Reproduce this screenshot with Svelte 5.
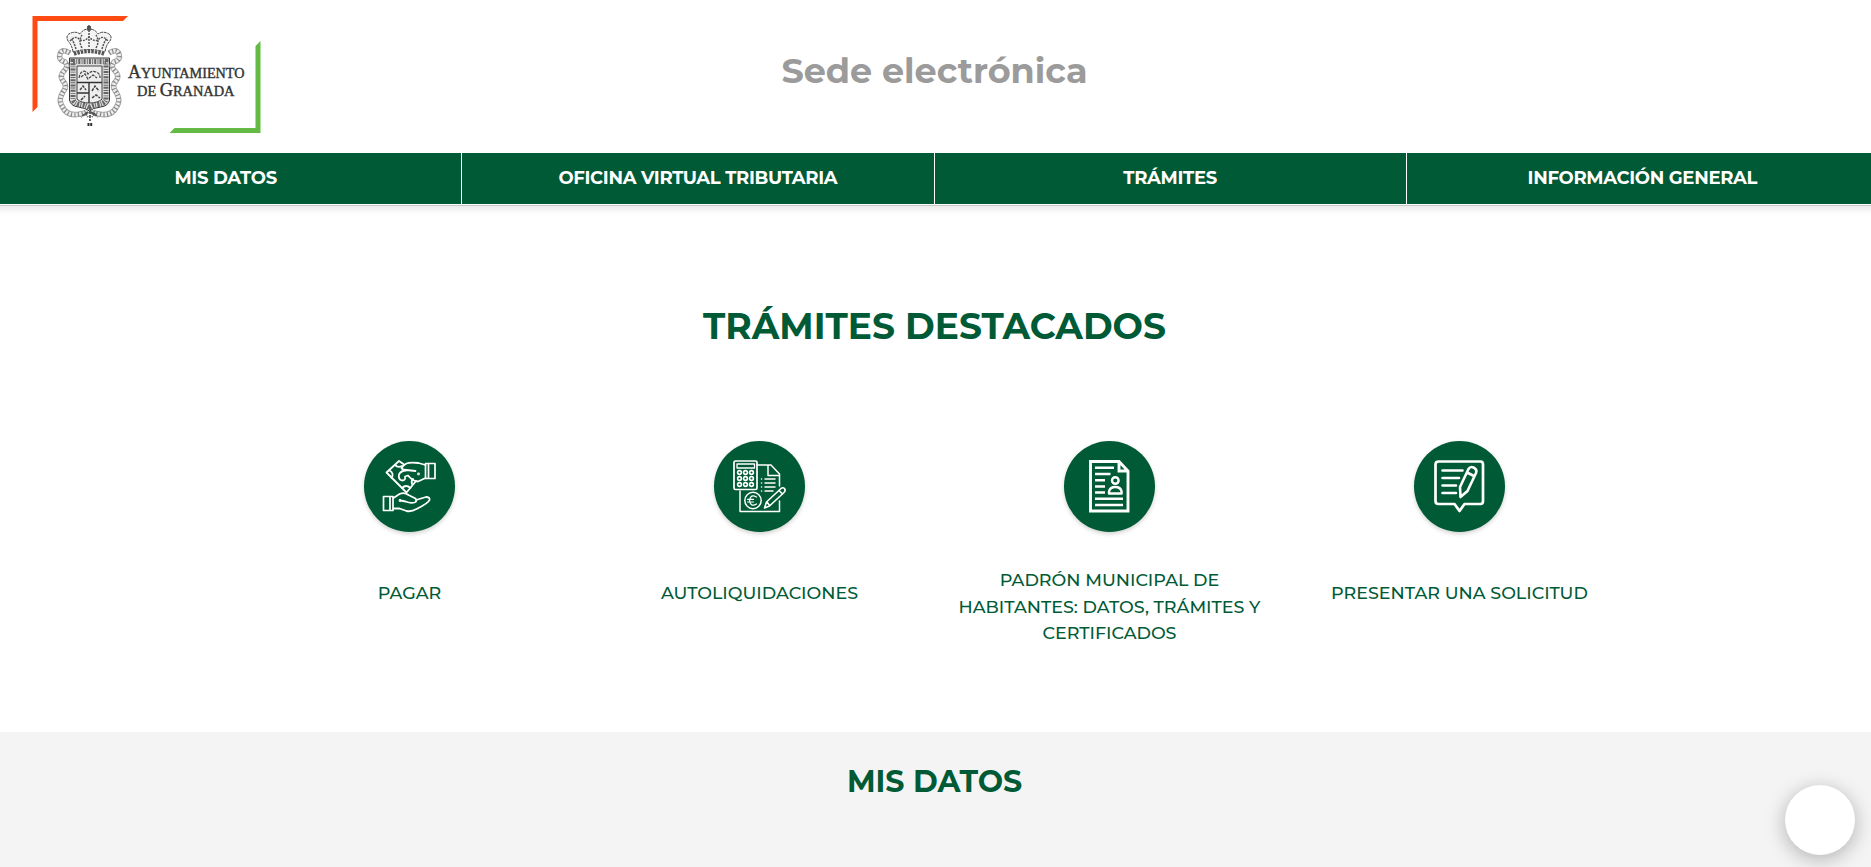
<script>
  const nav = ['MIS DATOS', 'OFICINA VIRTUAL TRIBUTARIA', 'TRÁMITES', 'INFORMACIÓN GENERAL'];
  const cards = [
    { icon: 'pay', lines: ['PAGAR'] },
    { icon: 'calc', lines: ['AUTOLIQUIDACIONES'] },
    { icon: 'doc', lines: ['PADRÓN MUNICIPAL DE', 'HABITANTES: DATOS, TRÁMITES Y', 'CERTIFICADOS'] },
    { icon: 'note', lines: ['PRESENTAR UNA SOLICITUD'] },
  ];
</script>

<header>
  <svg class="logo" viewBox="0 0 240 132" role="img" aria-label="Ayuntamiento de Granada">
    <path fill="#ff4a12" d="M.5 4h95.500l-5 5H5.500v86l-5 5z" />
    <path fill="#63bb46" d="M228.500 29v92H137.500l5-5h81V34z" />
    <g fill="none" stroke="#555" stroke-width="1">
      <!-- crown -->
      <path d="M41 40q-1-7-5-11-3-6 3-8 5-2 9 1 3-5 9-5t9 5q4-3 9-1 6 2 3 8-4 4-5 11-16-5-32 0z" fill="#f4f4f4" stroke="#444" stroke-dasharray="3 .7" />
      <path d="M44 37q-2-7-5-11m11 10q-4-7 0-13m7 12V19m7 17q4-7 0-13m6 14q2-7 5-11" stroke="#555" stroke-dasharray="2 1" stroke-width="1.500" />
      <path d="M57 19v-6m-2 2h4" stroke="#333" stroke-width="1.300" />
      <path d="M42 42q15-5 30 0" stroke-dasharray="2.500 1" stroke-width="3.500" stroke="#555" />
      <circle cx="57" cy="17" r="1.800" fill="#555" />
      <path d="M38 29q5-6 9-2t10-2q6 6 10 2t9 2" stroke-dasharray="2 1" stroke="#555" stroke-width="1.400" />
      <!-- shield -->
      <path d="M37.500 46h40v42q-1 6-9 7-8 1-11 4-4-3-11-4-8-1-9-7z" fill="#ddd" stroke="#333" />
      <path d="M41 49.500h33v38q-1 4-8 5-6 1-8.500 3-3-2-9-3-6.500-1-7.500-5z" stroke-dasharray="2 1.300 .9 1.100" stroke-width="5" stroke="#666" />
      <path d="M45 54h25v33q-4 4-12.500 4-8.500 0-12.500-4z" fill="#eee" stroke="#444" />
      <path d="M45 70.500h25M57 71v20M45 81h12" stroke="#333" stroke-width="1.400" />
      <path d="M47 66q1-6 5-7 3 1 4 3 4-4 8-2 4 1 4 6M49 65l4-3 3 5 5-4 4 3" stroke-dasharray="3 1" stroke="#444" stroke-width="1.200" />
      <path d="M48 78l3-4 3 4M60 79l3-5 4 5M60 86l4-3 4 3M49 88l4-4" stroke-dasharray="3 1" stroke="#444" stroke-width="1.500" />
      <!-- mantling -->
      <path d="M38 41q-8-5-10 1-2 6 5 8 4 4-1 9-5 5-1 10 5 5 0 11-5 8-1 14 5 11 18 8 6-1 7-3M77 41q8-5 10 1 2 6-5 8-4 4 1 9 5 5 1 10-5 5 0 11 5 8 1 14-5 11-18 8-6-1-7-3" stroke-width="5.500" stroke="#aaa" />
      <path d="M38 41q-8-5-10 1-2 6 5 8 4 4-1 9-5 5-1 10 5 5 0 11-5 8-1 14 5 11 18 8 6-1 7-3M77 41q8-5 10 1 2 6-5 8-4 4 1 9 5 5 1 10-5 5 0 11 5 8 1 14-5 11-18 8-6-1-7-3" stroke-width="3.500" stroke="#eee" />
      <path d="M38 41q-8-5-10 1-2 6 5 8 4 4-1 9-5 5-1 10 5 5 0 11-5 8-1 14 5 11 18 8 6-1 7-3M77 41q8-5 10 1 2 6-5 8-4 4 1 9 5 5 1 10-5 5 0 11 5 8 1 14-5 11-18 8-6-1-7-3" stroke-width="4.500" stroke="#888" stroke-dasharray="1.200 2.300" />
      <path d="M58 95v14m-2-9l-7 5m10-5l7 5M53 101l3 4m7-4l-3 4" stroke="#555" stroke-width="1.800" stroke-dasharray="3 1" />
      <path d="M55.500 112.500h5" stroke="#333" stroke-width="3" stroke-dasharray="2 .7" />
    </g>
    <g class="brand">
      <text x="96" y="65.500" textLength="116.500" lengthAdjust="spacingAndGlyphs"><tspan font-size="19">A</tspan>YUNTAMIENTO</text>
      <text x="105" y="84" textLength="97.500" lengthAdjust="spacingAndGlyphs">DE <tspan font-size="19">G</tspan>RANADA</text>
    </g>
  </svg>
  <h1>Sede electrónica</h1>
</header>

<nav>
  {#each nav as item}
    <a href="#top">{item}</a>
  {/each}
</nav>

<main>
  <h2>TRÁMITES DESTACADOS</h2>
  <div class="cards">
    {#each cards as card}
      <div class="card">
        <div class="circle">
          <svg viewBox="0 0 91 91" fill="none" stroke="#fff" stroke-width="1.8" stroke-linejoin="round" stroke-linecap="round">
            {#if card.icon === 'pay'}
              <path d="M40 23.500L35 20 22.500 31.500l20 20L52 40" />
              <path d="M31 24q3 3 7 1M25.500 29.500q5 3 2 7.500M38 47q4-4 8.500 0M48 43q-1-3 1-5" />
              <path d="M61.500 24l-7-2q-9-1-12 .5-3 1.500-5 4.500 1 2 5 2l9 1M42 29.500q-5 0-7 4-1 5 3 6 4 0 3-4l3-1q5 6 10 6l7.500-3.500" />
              <path d="M61.500 22.500v15H71v-15zM64.500 22.500v15" stroke-width="1.700" />
              <path d="M19.500 55.500v14H29v-14zM26 55.500v14" stroke-width="1.700" />
              <path d="M29.500 57l6-4q5-2 9 1l7 3.500q2 3-1 4-4 1-9-1l-5-1M52 59l10-3q4 0 3.500 3-1 3-13 9-5 3-10 2l-7-2.500h-6" />
              <circle cx="54.500" cy="33" r=".5" /><circle cx="36" cy="59.500" r=".5" />
            {:else if card.icon === 'calc'}
              <path d="M43 24h14l8.500 9v12M65.500 60v10.500H26V50M54 25v9.500h10.500" stroke-width="1.500" />
              <rect x="20" y="20" width="23" height="28.500" rx="1.500" stroke-width="1.700" />
              <rect x="23" y="23" width="17.500" height="4" stroke-width="1.300" />
              {#each [31.5, 37.5, 43.500] as y}
                {#each [25.500, 31.500, 37.500] as x}
                  <circle cx={x} cy={y} r="1.900" stroke-width="1.600" />
                {/each}
              {/each}
              <path d="M51 38h10M51 42h10M51 46h10M51 50h8M47.500 38h.1M47.500 42h.1M47.500 46h.1M47.500 50h.1" stroke-width="1.500" />
              <circle cx="39" cy="59.500" r="8.200" stroke-width="1.500" />
              <path d="M42.500 56q-6-3.500-7 3.500 1 7 7 3.500M33.500 58.300h6M33.500 61h6" stroke-width="1.200" />
              <path d="M50.500 67l2-6 14.500-13.500q2-1.500 3.500 0 1.500 2-.5 4L55.500 65zM53 61l2.500 3.500M65 49.500l3.500 3.500" stroke-width="1.600" />
            {:else if card.icon === 'doc'}
              <path d="M26.500 20.500h28.500L64 30v40H26.500zM55 21v9h9" stroke-width="2.900" stroke-linejoin="miter" stroke-linecap="butt" />
              <path d="M31 26.700h19M31 33h15.500M31 39.200h10M31 45.500h10M31 51.500h10M31 57.800h28M31 64h28" stroke-width="2.600" stroke-linecap="butt" />
              <circle cx="51.300" cy="39.500" r="3.300" stroke-width="2.400" />
              <path d="M45 52.500v-2q1-4.500 6.300-4.500t6.300 4.500v2z" stroke-width="2.400" />
            {:else}
              <path d="M24.500 20.500h42q2.500 0 2.500 3v36.500q0 3-2.500 3H50.500L45.500 70l-5-7h-16q-3 0-3-3V23.500q0-3 3-3z" stroke-width="2.700" />
              <path d="M28.500 29.500h20M28.500 37h16.500M28.500 44.500h13.500M28.500 52h13.500" stroke-width="2.600" />
              <path d="M46 46l8.500-18q2-3 5-1.500 4 2 2.500 5.500l-8.500 18-7 6zM53 31.500l7 3.500" stroke-width="2.600" />
            {/if}
          </svg>
        </div>
        <p>{#each card.lines as line}<span>{line}</span>{/each}</p>
      </div>
    {/each}
  </div>
</main>

<section>
  <h3>MIS DATOS</h3>
</section>
<div class="fab"></div>

<style>
  :global(body) {
    font-family: Montserrat, Inter, 'Open Sans', sans-serif;
    background: #fff;
    overflow: hidden;
  }
  h1, h2, h3, p { margin: 0; }
  header {
    height: 153px;
    display: grid;
    grid-template-columns: 1fr auto 1fr;
    align-items: start;
  }
  .logo { width: 240px; height: 132px; margin: 12px 0 0 32px; }
  .brand { font-family: 'Liberation Serif', serif; font-size: 15px; fill: #333; stroke: #333; stroke-width: .4px; }
  h1 {
    font-size: 35px;
    line-height: 44px;
    font-weight: 700;
    color: #9b9b9b;
    padding: 49px 2px 0 0;
  }
  nav {
    display: flex;
    margin: 0 -8px 0 -10px;
    height: 51px;
    background: #005a36;
    border-bottom: 1px solid #fff;
    box-shadow: 0 1px 0 #c8c8c8, 0 4px 8px rgba(0, 0, 0, .1);
  }
  a {
    box-sizing: border-box;
    width: 25%;
    border-right: 1px solid #fff;
    color: #fff;
    text-align: center;
    text-decoration: none;
    font-size: 18px;
    letter-spacing: -.3px;
    font-weight: 700;
    line-height: 51px;
  }
  main { height: 527px; box-sizing: border-box; padding-top: 97px; }
  h2, h3 { text-align: center; color: #005a36; font-weight: 700; padding-right: 2px; }
  h2 { font-size: 36px; line-height: 48px; }
  .cards {
    width: 1400px;
    margin: 91px auto 0;
    padding-right: 2px;
    display: grid;
    grid-template-columns: repeat(4, 1fr);
  }
  .card { display: flex; flex-direction: column; align-items: center; gap: 35px; }
  .circle {
    width: 91px;
    height: 91px;
    border-radius: 50%;
    background: #005a36;
    box-shadow: 0 2px 4px rgba(0, 0, 0, .18);
  }
  .circle svg { display: block; }
  p {
    min-height: 53px;
    display: flex;
    flex-direction: column;
    align-items: center;
    justify-content: center;
    color: #005a36;
    font-size: 17.5px;
    font-weight: 500;
    line-height: 26.6px;
    white-space: nowrap;
  }
  section { height: 135px; background: #f4f4f4; }
  h3 { font-size: 30px; line-height: 40px; padding-top: 30px; }
  .fab {
    position: fixed;
    right: 16px;
    bottom: 12px;
    width: 70px;
    height: 70px;
    border-radius: 50%;
    background: #fff;
    box-shadow: 0 4px 20px rgba(0, 0, 0, .28);
  }
</style>
